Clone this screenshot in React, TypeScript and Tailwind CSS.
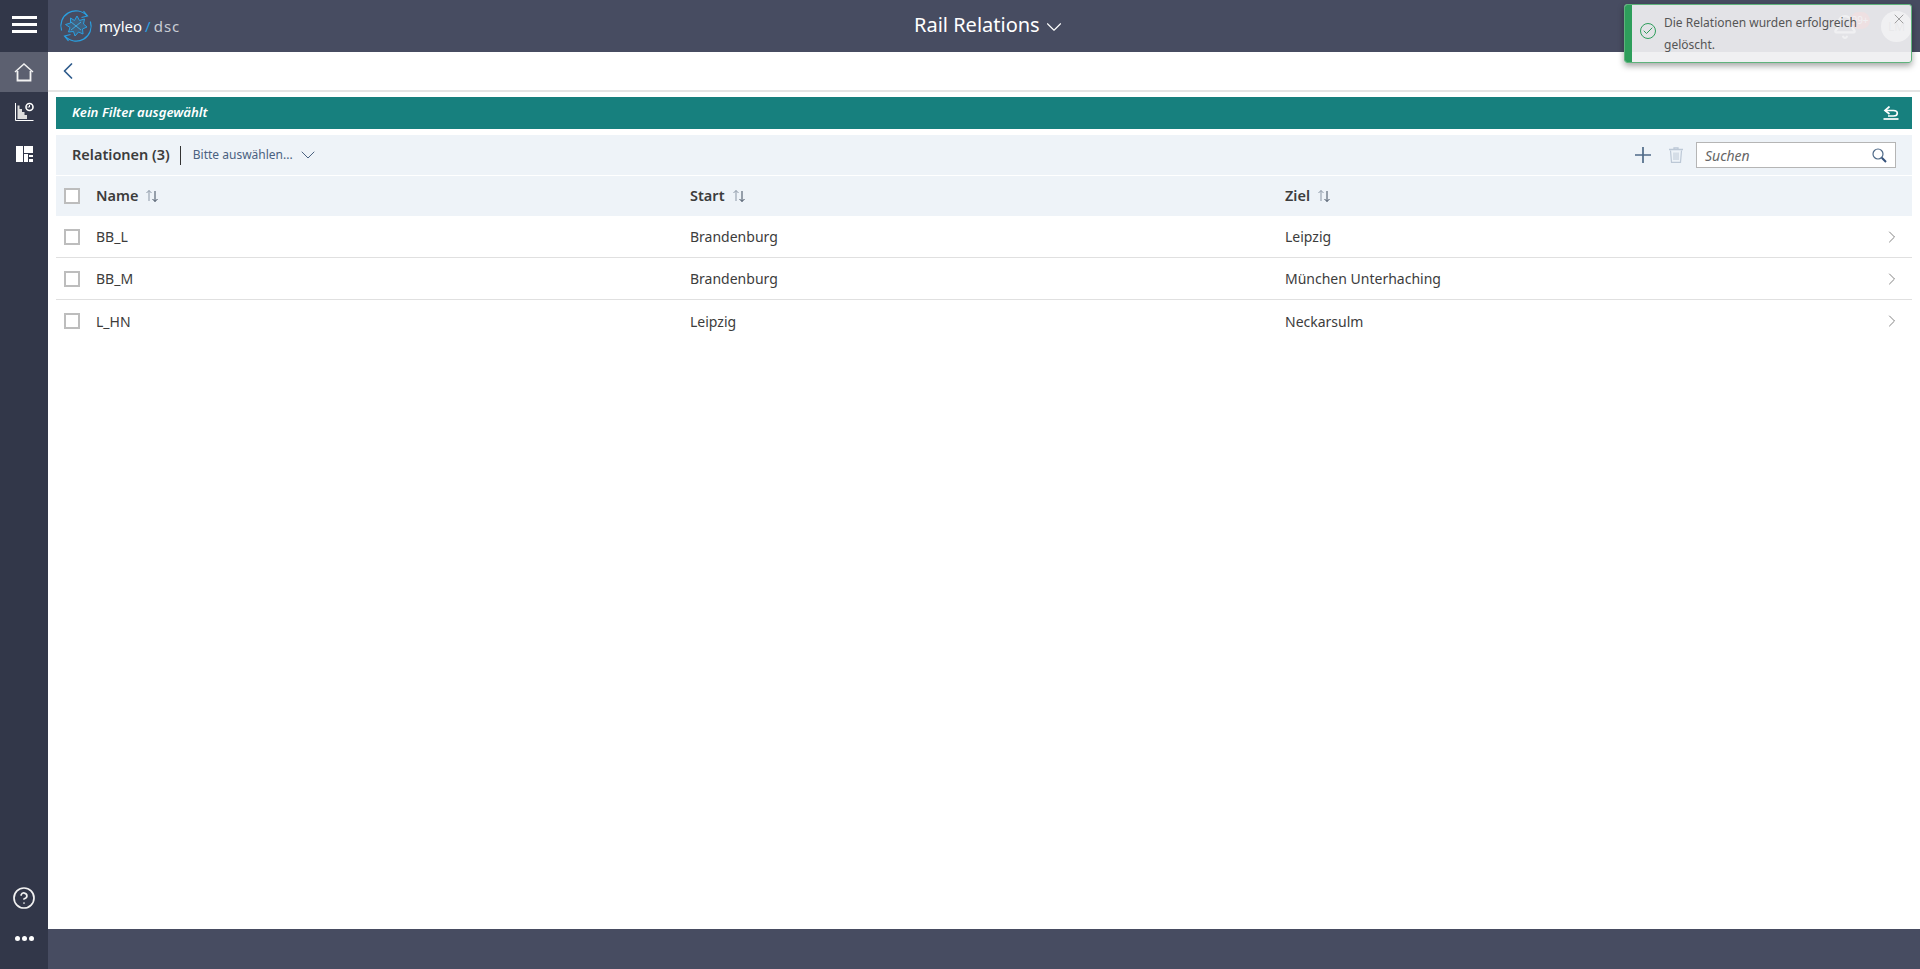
import React from "react";
import { ChevronDown, ChevronLeft, ChevronRight, X, Bell, CircleHelp, Check } from "lucide-react";

const rows = [
  { name: "BB_L", start: "Brandenburg", ziel: "Leipzig" },
  { name: "BB_M", start: "Brandenburg", ziel: "München Unterhaching" },
  { name: "L_HN", start: "Leipzig", ziel: "Neckarsulm" },
];

const Logo = () => (
  <svg width="36" height="36" viewBox="0 0 36 36" fill="none">
    <path d="M3.600 22.500A15 15 0 0 1 29 7.800" stroke="#2a9fe0" strokeWidth="1.200" />
    <path d="M25.500 3L29.500 8L23.500 9.500" stroke="#2a9fe0" strokeWidth="1.200" />
    <path d="M32.400 13.500A15 15 0 0 1 7 28.200" stroke="#2a9fe0" strokeWidth="1.200" />
    <path d="M10.500 33L6.500 28L12.500 26.500" stroke="#2a9fe0" strokeWidth="1.200" />
    <path
      d="M19 8L21.500 12.500L26.500 11L25.500 16L29 19L24.500 21L25 26L20.500 24L17 28L15.500 23.500L10.500 24L12 19.500L7.500 16.500L12.500 15L12.500 10L16.500 12.500Z"
      fill="#2a9fe0"
      fillOpacity="0.25"
      stroke="#2a9fe0"
      strokeWidth="1"
    />
    <path d="M13 14L23 22M23 14L13 22" stroke="#3fb0e8" strokeWidth="0.900" />
  </svg>
);

const HomeIcon = () => (
  <svg width="20" height="19" viewBox="0 0 20 19" fill="none">
    <path d="M1 9L10 1L19 9" stroke="#f2f2f2" strokeWidth="1.500" />
    <path d="M3.500 8V17.500H16.500V8" stroke="#f2f2f2" strokeWidth="1.800" />
  </svg>
);

const ChartIcon = () => (
  <svg width="20" height="20" viewBox="0 0 20 20" fill="none">
    <path d="M1.500 1V18.500H19.500" stroke="#fff" strokeWidth="1" />
    <path d="M3.500 17V3.500H5.500V7H8V10H10.500V13H13V17Z" fill="#ddd" />
    <circle cx="15.500" cy="5" r="3.500" stroke="#fff" strokeWidth="1.600" />
    <path d="M15.500 5V3M15.500 5H13.500" stroke="#fff" strokeWidth="1" />
  </svg>
);

const DashIcon = () => (
  <svg width="17" height="16" viewBox="0 0 17 16">
    <path d="M0 0H7V16H0ZM8 0H17V7H8ZM8 8H12V16H8ZM13 9H17V11H13ZM13 13H17V16H13Z" fill="#fff" />
  </svg>
);

const SortIcon = () => (
  <svg width="14" height="14" viewBox="0 0 14 14" fill="none" className="ml-[7px]">
    <path d="M4 12V1.500M1.500 4L4 1.500L6.500 4" stroke="#8b97a6" strokeWidth="1" />
    <path d="M10 2V12.500M7.500 10L10 12.500L12.500 10" stroke="#3d4a5c" strokeWidth="1" />
  </svg>
);

const UndoIcon = () => (
  <svg width="16" height="14" viewBox="0 0 16 14" fill="none">
    <path d="M6.500 0.500L2 4.500L6.500 8" stroke="#fff" strokeWidth="1.700" />
    <path d="M2 4.500H10.500C15.500 4.500 15.500 10 10.500 10H5" stroke="#fff" strokeWidth="1.700" />
    <path d="M0.500 13H15.500" stroke="#fff" strokeWidth="1.700" />
  </svg>
);

const PlusIcon = () => (
  <svg width="16" height="16" viewBox="0 0 16 16" className="ml-auto">
    <path d="M8 0V16M0 8H16" stroke="#4f6a88" strokeWidth="1.700" fill="none" />
  </svg>
);

const TrashIcon = () => (
  <svg width="14" height="16" viewBox="0 0 14 16" fill="none" className="ml-[18px]">
    <path d="M0 2.500H14M5 2.500V0.800H9V2.500" stroke="#bcc8d6" strokeWidth="1.300" />
    <path d="M1.500 3.500L2.500 15.300H11.500L12.500 3.500" stroke="#bcc8d6" strokeWidth="1.200" />
    <path d="M5 5.500V13M7 5.500V13M9 5.500V13" stroke="#bcc8d6" strokeWidth="1" />
  </svg>
);

const SearchIcon = () => (
  <svg width="15" height="15" viewBox="0 0 15 15" fill="none">
    <circle cx="6" cy="6" r="5" stroke="#4f6a88" strokeWidth="1.200" />
    <path d="M9.800 9.800L14 14" stroke="#33507a" strokeWidth="2" />
  </svg>
);

const Checkbox = () => <span className="block w-4 h-4 border-2 border-[#bdbdbd] bg-white" />;

export default function App() {
  return (
    <div className="relative flex h-[969px] w-[1920px] overflow-hidden bg-white font-['Noto_Sans','Open_Sans',sans-serif] text-[#3c3c3c]">
      <aside className="flex w-12 shrink-0 flex-col bg-[#323749]">
        <div className="flex h-[52px] flex-col items-center justify-center gap-[4px] pb-[3px]">
          <span className="h-[3px] w-[25px] bg-white" />
          <span className="h-[3px] w-[25px] bg-white" />
          <span className="h-[3px] w-[25px] bg-white" />
        </div>
        <div className="flex h-10 items-center justify-center bg-[#5c6070]">
          <HomeIcon />
        </div>
        <div className="flex h-10 items-center justify-center">
          <ChartIcon />
        </div>
        <div className="flex h-[44px] items-center justify-center">
          <DashIcon />
        </div>
        <div className="mt-auto flex h-10 items-center justify-center">
          <CircleHelp size={24} strokeWidth={1.700} className="text-[#f2f2f2]" />
        </div>
        <div className="mb-[11px] flex h-10 items-center justify-center gap-[2px]">
          <span className="h-[5px] w-[5px] rounded-full bg-white" />
          <span className="h-[5px] w-[5px] rounded-full bg-white" />
          <span className="h-[5px] w-[5px] rounded-full bg-white" />
        </div>
      </aside>

      <div className="flex min-w-0 flex-1 flex-col">
        <header className="relative flex h-[52px] shrink-0 items-center bg-[#474c61] pl-[10px]">
          <Logo />
          <span className="ml-[5px] text-[15px] text-white">myleo</span>
          <span className="mx-[3px] text-[15px] text-[#2a9fe0]">/</span>
          <span className="text-[15px] tracking-[1px] text-[#c9ccd4]">dsc</span>
          <div className="absolute left-[866px] top-[9px] flex items-center text-white">
            <span className="text-[20px] leading-[32px]">Rail Relations</span>
            <ChevronDown size={26} strokeWidth={1} className="ml-[1px] mt-[3px]" />
          </div>
          <Bell size={26} strokeWidth={2} className="absolute left-[1784px] top-[14px] text-white" />
          <span className="absolute left-[1802px] top-[12px] flex h-[17px] w-[20px] items-center justify-center rounded-full bg-[#e02020] text-[10px] text-white">
            99+
          </span>
          <span className="absolute left-[1833px] top-[11px] flex h-[31px] w-[31px] items-center justify-center rounded-full bg-white text-[12px] text-[#999]">
            LM
          </span>
        </header>

        <div className="flex h-[40px] shrink-0 items-center border-b-2 border-[#e4e4e4] pl-[6px]">
          <ChevronLeft size={28} strokeWidth={1.500} className="text-[#2f5c8c]" />
        </div>

        <main className="flex flex-1 flex-col px-2 pt-[5px]">
          <div className="flex h-8 shrink-0 items-center justify-between bg-[#17807e] pl-4 pr-[13px]">
            <span className="text-[13.200px] font-semibold italic text-white">Kein Filter ausgewählt</span>
            <UndoIcon />
          </div>

          <div className="mt-[6px] flex h-10 shrink-0 items-center bg-[#eef3f8] pl-4 pr-4">
            <span className="text-[14.500px] font-semibold text-[#3c3c3c]">Relationen (3)</span>
            <span className="ml-[10px] mr-3 h-[19px] w-px bg-[#333]" />
            <span className="text-[12px] text-[#4a6180]">Bitte auswählen...</span>
            <ChevronDown size={24} strokeWidth={1} className="ml-[3px] text-[#4a6180]" />
            <PlusIcon />
            <TrashIcon />
            <div className="ml-[13px] flex h-[26px] w-[200px] items-center justify-between border border-[#b5b5b5] bg-white pl-2 pr-2">
              <span className="text-[14px] italic text-[#666]">Suchen</span>
              <SearchIcon />
            </div>
          </div>

          <div className="mt-px grid h-10 shrink-0 grid-cols-[40px_594px_595px_1fr] items-center bg-[#eef3f8] pb-px text-[14.500px] font-semibold text-[#3c3c3c]">
            <div className="pl-2">
              <Checkbox />
            </div>
            <div className="flex items-center">
              Name
              <SortIcon />
            </div>
            <div className="flex items-center">
              Start
              <SortIcon />
            </div>
            <div className="flex items-center">
              Ziel
              <SortIcon />
            </div>
          </div>

          {rows.map((row, i) => (
            <div
              key={row.name}
              className={`grid h-[42px] shrink-0 grid-cols-[40px_594px_595px_1fr] items-center text-[14px] text-[#3c3c3c] ${i < 2 ? "border-b border-[#e0e0e0]" : ""}`}
            >
              <div className="pl-2">
                <Checkbox />
              </div>
              <div>{row.name}</div>
              <div>{row.start}</div>
              <div className="flex items-center justify-between pr-[10px]">
                {row.ziel}
                <ChevronRight size={20} strokeWidth={1.100} className="text-[#777]" />
              </div>
            </div>
          ))}
        </main>

        <footer className="h-10 shrink-0 bg-[#474c61]" />
      </div>

      <div className="absolute left-[1624px] top-[4px] flex h-[59px] w-[288px] overflow-hidden rounded-[3px] border border-[#5fb37c] bg-[#efeff1]/[0.93] shadow-[0_3px_6px_rgba(0,0,0,0.35)]">
        <span className="w-[7px] shrink-0 bg-[#2e9e5b]" />
        <span className="ml-2 mt-[18px] flex h-[16px] w-[16px] shrink-0 items-center justify-center rounded-full border border-[#2e9e5b]">
          <Check size={12} strokeWidth={2} className="text-[#2e9e5b]" />
        </span>
        <p className="ml-2 w-[200px] pt-[7px] text-[12px] leading-[22px] text-[#555]">Die Relationen wurden erfolgreich gelöscht.</p>
        <X size={16} strokeWidth={1} className="absolute right-[4px] top-[6px] text-[#777]" />
      </div>
    </div>
  );
}
